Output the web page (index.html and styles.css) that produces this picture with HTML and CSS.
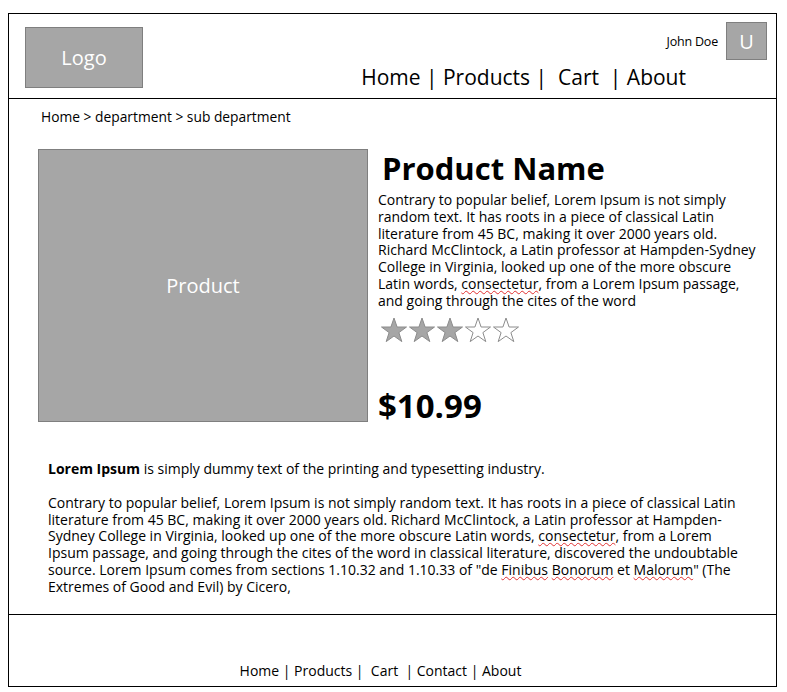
FILE: index.html
```html
<!DOCTYPE html>
<html>
<head>
<meta charset="utf-8">
<link rel="stylesheet" href="styles.css">
</head>
<body>
<div class="frame">
  <header class="header">
    <div class="logo">Logo</div>
    <div class="header-right">
      <div class="user">
        <span class="user-name">John Doe</span>
        <div class="avatar">U</div>
      </div>
      <nav class="nav">Home | Products |&nbsp; Cart &nbsp;| About</nav>
    </div>
  </header>
  <main class="main">
    <div class="crumbs">Home &gt; department &gt; sub department</div>
    <section class="product">
      <div class="product-img">Product</div>
      <div class="product-info">
        <h1 class="product-name">Product Name</h1>
        <p class="product-desc">Contrary to popular belief, Lorem Ipsum is not simply random text. It has roots in a piece of classical Latin literature from 45 BC, making it over 2000 years old. Richard McClintock, a Latin professor at Hampden-Sydney College in Virginia, looked up one of the more obscure Latin words, <span class="sp">consectetur</span>, from a Lorem Ipsum passage, and going through the cites of the word</p>
        <div class="stars">
          <svg width="28" height="26" viewBox="0 0 28 26"><polygon class="on" points="14,1 17.1,10 26.5,10 18.9,15.6 21.8,24.6 14,19 6.2,24.6 9.1,15.6 1.5,10 10.9,10"/></svg>
          <svg width="28" height="26" viewBox="0 0 28 26"><polygon class="on" points="14,1 17.1,10 26.5,10 18.9,15.6 21.8,24.6 14,19 6.2,24.6 9.1,15.6 1.5,10 10.9,10"/></svg>
          <svg width="28" height="26" viewBox="0 0 28 26"><polygon class="on" points="14,1 17.1,10 26.5,10 18.9,15.6 21.8,24.6 14,19 6.2,24.6 9.1,15.6 1.5,10 10.9,10"/></svg>
          <svg width="28" height="26" viewBox="0 0 28 26"><polygon class="off" points="14,1 17.1,10 26.5,10 18.9,15.6 21.8,24.6 14,19 6.2,24.6 9.1,15.6 1.5,10 10.9,10"/></svg>
          <svg width="28" height="26" viewBox="0 0 28 26"><polygon class="off" points="14,1 17.1,10 26.5,10 18.9,15.6 21.8,24.6 14,19 6.2,24.6 9.1,15.6 1.5,10 10.9,10"/></svg>
        </div>
        <div class="price">$10.99</div>
      </div>
    </section>
    <section class="details">
      <p><b>Lorem Ipsum</b> is simply dummy text of the printing and typesetting industry.</p>
      <p>Contrary to popular belief, Lorem Ipsum is not simply random text. It has roots in a piece of classical Latin literature from 45 BC, making it over 2000 years old. Richard McClintock, a Latin professor at Hampden-Sydney College in Virginia, looked up one of the more obscure Latin words, <span class="sp">consectetur</span>, from a Lorem Ipsum passage, and going through the cites of the word in classical literature, discovered the undoubtable source. Lorem Ipsum comes from sections 1.10.32 and 1.10.33 of "de <span class="sp">Finibus</span> <span class="sp">Bonorum</span> et <span class="sp">Malorum</span>" (The Extremes of Good and Evil) by Cicero,</p>
    </section>
  </main>
  <footer class="footer"><span class="footer-links">Home | Products |&nbsp; Cart &nbsp;| Contact | About</span></footer>
</div>
</body>
</html>
```

FILE: styles.css
```css
* { box-sizing: border-box; }
html, body { margin: 0; padding: 0; background: #fff; }
body {
  font-family: "Open Sans", "Noto Sans", sans-serif;
  color: #000;
}
.frame {
  margin: 13px 0 0 8px;
  width: 769px;
  height: 674px;
  border: 1px solid #000;
  display: flex;
  flex-direction: column;
}
.header {
  flex: 0 0 85px;
  height: 85px;
  border-bottom: 1px solid #000;
  display: flex;
  justify-content: space-between;
  padding: 13px 9px 0 16px;
}
.logo {
  width: 118px;
  height: 61px;
  background: #a6a6a6;
  border: 1px solid #7f7f7f;
  color: #fff;
  font-size: 20px;
  display: flex;
  align-items: center;
  justify-content: center;
}
.header-right {
  display: flex;
  flex-direction: column;
  align-items: flex-end;
  margin-top: -5px;
}
.user {
  display: flex;
  align-items: center;
  gap: 8px;
}
.user-name { font-size: 12.5px; letter-spacing: -0.2px; }
.avatar {
  width: 41px;
  height: 38px;
  background: #a6a6a6;
  border: 1px solid #7f7f7f;
  color: #fff;
  font-size: 20px;
  display: flex;
  align-items: center;
  justify-content: center;
}
.nav {
  font-size: 21px;
  margin-right: 81px;
  margin-top: 3px;
  line-height: 29px;
  white-space: pre;
}
.main {
  flex: 1 1 auto;
  min-height: 0;
  overflow: hidden;
}
.crumbs {
  font-size: 13.8px;
  padding: 9px 0 0 32px;
  line-height: 18px;
}
.product {
  display: flex;
  margin-top: 23px;
  padding-left: 29px;
}
.product-img {
  width: 330px;
  height: 273px;
  background: #a6a6a6;
  border: 1px solid #7f7f7f;
  color: #fff;
  font-size: 20px;
  display: flex;
  align-items: center;
  justify-content: center;
  flex-shrink: 0;
}
.product-info {
  padding-left: 10px;
  width: 395px;
}
.product-name {
  font-size: 31px;
  font-weight: bold;
  margin: 0 0 0 4px;
  line-height: 38px;
}
.product-desc {
  margin: 5px 0 0;
  font-size: 14px;
  line-height: 16.8px;
}
.sp {
  display: inline-block;
  line-height: 16.8px;
  text-decoration: underline wavy #e03030;
  text-decoration-thickness: 1px;
  text-underline-offset: 1px;
}
.stars {
  display: flex;
  margin: 7px 0 0 2px;
}
.stars svg { display: block; }
.stars .on { fill: #a6a6a6; stroke: #8c8c8c; stroke-width: 1; }
.stars .off { fill: #fff; stroke: #8c8c8c; stroke-width: 1; }
.price {
  font-size: 33px;
  font-weight: bold;
  margin-top: 43px;
  line-height: 40px;
}
.details {
  padding: 35px 30px 0 39px;
  font-size: 14px;
  line-height: 16.8px;
}
.details p { margin: 0 0 17.5px; }
.details p:last-child { margin-bottom: 0; }
.footer {
  flex: 0 0 72px;
  height: 72px;
  border-top: 1px solid #000;
  display: flex;
  align-items: flex-end;
  justify-content: center;
  padding: 0 24px 5px 0;
  line-height: 20px;
}
.footer-links {
  white-space: pre;
  font-size: 14px;
}
```
